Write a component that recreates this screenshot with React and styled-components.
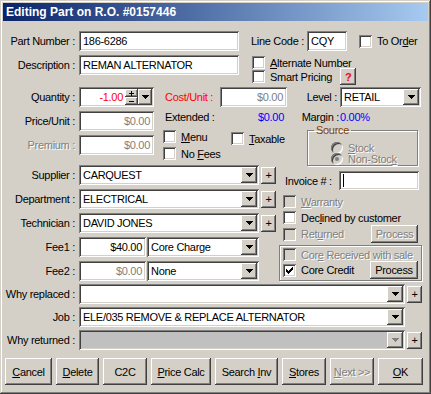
import React from 'react';
import styled, { createGlobalStyle, css } from 'styled-components';

const FACE = '#d4d0c8';

const sunken = css`
  box-shadow: inset 1px 1px #808080, inset -1px -1px #ffffff, inset 2px 2px #404040, inset -2px -2px ${FACE};
`;

const raised = css`
  box-shadow: inset -1px -1px #404040, inset 1px 1px #ffffff, inset -2px -2px #808080;
`;

const GlobalStyle = createGlobalStyle`
  html, body {
    margin: 0;
    padding: 0;
    background: ${FACE};
  }
  body {
    font-family: "Liberation Sans", Arial, sans-serif;
    font-size: 11px;
    letter-spacing: -0.3px;
    color: #000;
  }
  * { box-sizing: border-box; }
`;

const Window = styled.div`
  width: 431px;
  height: 394px;
  padding: 3px;
  background: ${FACE};
  box-shadow: inset -1px -1px #404040, inset 1px 1px ${FACE}, inset -2px -2px #808080, inset 2px 2px #ffffff;
  display: flex;
  flex-direction: column;
`;

const TitleBar = styled.div`
  height: 18px;
  padding-left: 3px;
  display: flex;
  align-items: center;
  background: linear-gradient(to right, #0a246a, #a6caf0);
  color: #fff;
  font-weight: bold;
  font-size: 12px;
  letter-spacing: 0;
`;

const Body = styled.div`
  flex: 1;
  padding: 10px 0 0 2px;
  display: flex;
  flex-direction: column;
`;

const Section = styled.div`
  display: flex;
  align-items: flex-start;
  height: ${(p) => (p.$h ? `${p.$h}px` : 'auto')};
  margin-top: ${(p) => p.$mt || 0}px;
`;

const Col = styled.div`
  display: flex;
  flex-direction: column;
  width: ${(p) => (p.$w ? `${p.$w}px` : 'auto')};
  margin-left: ${(p) => p.$ml || 0}px;
`;

const Row = styled.div`
  display: flex;
  align-items: center;
  height: ${(p) => p.$h || 20}px;
  margin-top: ${(p) => p.$mt || 0}px;
  margin-left: ${(p) => p.$ml || 0}px;
`;

const Label = styled.span`
  flex-shrink: 0;
  width: ${(p) => p.$w || 74}px;
  padding-right: ${(p) => (p.$left ? 0 : p.$pr ?? 4)}px;
  margin-left: ${(p) => p.$ml || 0}px;
  text-align: ${(p) => (p.$left ? 'left' : 'right')};
  white-space: nowrap;
  color: ${(p) => p.$color || '#000'};
  ${(p) => p.$up && css`
    align-self: flex-start;
    line-height: 13px;
  `}
  ${(p) => p.$dim && css`
    color: #808080;
    text-shadow: 1px 1px #fff;
  `}
`;

const Value = styled.span`
  align-self: flex-start;
  line-height: 13px;
  width: ${(p) => (p.$w ? `${p.$w}px` : 'auto')};
  padding-right: ${(p) => p.$pr || 0}px;
  text-align: ${(p) => (p.$right ? 'right' : 'left')};
  color: #0000ff;
`;

const Field = styled.div`
  flex-shrink: 0;
  width: ${(p) => p.$w}px;
  height: ${(p) => p.$h || 20}px;
  padding: 0 4px;
  display: flex;
  align-items: center;
  justify-content: ${(p) => (p.$right ? 'flex-end' : 'flex-start')};
  background: #fff;
  color: ${(p) => p.$color || '#000'};
  white-space: nowrap;
  overflow: hidden;
  ${sunken}
`;

const Caret = styled.span`
  width: 1px;
  height: 13px;
  background: #000;
`;

const SelectBox = styled.div`
  flex-shrink: 0;
  width: ${(p) => p.$w}px;
  height: 20px;
  margin-left: ${(p) => p.$ml || 0}px;
  padding: 2px;
  display: flex;
  align-items: center;
  background: ${(p) => (p.$disabled ? '#c0c0c0' : '#fff')};
  ${sunken}
`;

const SelectText = styled.span`
  flex: 1;
  padding-left: 2px;
  white-space: nowrap;
  overflow: hidden;
`;

const DropBtn = styled.span`
  flex-shrink: 0;
  width: ${(p) => p.$w || 16}px;
  height: 16px;
  display: flex;
  align-items: center;
  justify-content: center;
  background: ${FACE};
  ${raised}
  svg { fill: ${(p) => (p.$disabled ? '#808080' : '#000')}; }
`;

const Arrow = () => (
  <svg width="7" height="4" viewBox="0 0 7 4">
    <path d="M0 0h7v1H0zM1 1h5v1H1zM2 2h3v1H2zM3 3h1v1H3z" />
  </svg>
);

const Select = ({ w, ml, value, disabled }) => (
  <SelectBox $w={w} $ml={ml} $disabled={disabled}>
    <SelectText>{value}</SelectText>
    <DropBtn $disabled={disabled}><Arrow /></DropBtn>
  </SelectBox>
);

const PlusBtn = styled.span`
  flex-shrink: 0;
  width: 15px;
  height: 17px;
  margin-left: 2px;
  display: flex;
  align-items: center;
  justify-content: center;
  background: ${FACE};
  ${raised}
`;

const QtyBox = styled.div`
  flex-shrink: 0;
  width: 75px;
  height: 20px;
  padding: 2px;
  display: flex;
  background: #fff;
  ${sunken}
`;

const QtyText = styled.span`
  flex: 1;
  display: flex;
  align-items: center;
  justify-content: flex-end;
  padding-right: 2px;
  color: #ff0000;
`;

const SpinCol = styled.span`
  width: 13px;
  display: flex;
  flex-direction: column;
`;

const SpinBtn = styled.span`
  flex: 1;
  display: flex;
  align-items: center;
  justify-content: center;
  background: ${FACE};
  ${raised}
`;

const CheckBox = styled.span`
  flex-shrink: 0;
  width: 13px;
  height: 13px;
  display: flex;
  align-items: center;
  justify-content: center;
  background: ${(p) => (p.$disabled ? FACE : '#fff')};
  ${sunken}
`;

const CheckRow = styled.label`
  display: flex;
  align-items: center;
  gap: 5px;
  height: ${(p) => p.$h || 13}px;
  margin-top: ${(p) => p.$mt || 0}px;
  margin-left: ${(p) => p.$ml || 0}px;
  white-space: nowrap;
`;

const Dim = styled.span`
  color: #808080;
  text-shadow: 1px 1px #fff;
`;

const Check = ({ checked, disabled }) => (
  <CheckBox $disabled={disabled}>
    {checked && (
      <svg width="7" height="7" viewBox="0 0 7 7">
        <path d="M6 0h1v1H6zM5 1h2v1H5zM0 2h1v1H0zM4 2h3v1H4zM0 3h2v1H0zM3 3h3v1H3zM0 4h5v1H0zM1 5h3v1H1zM2 6h1v1H2z" fill="#000" />
      </svg>
    )}
  </CheckBox>
);

const RadioDot = styled.span`
  flex-shrink: 0;
  width: 12px;
  height: 12px;
  border-radius: 50%;
  display: flex;
  align-items: center;
  justify-content: center;
  background: ${FACE};
  box-shadow: inset 1px 1px #808080, inset -1px -1px #fff, inset 2px 2px #404040;
  &::after {
    content: '';
    width: 4px;
    height: 4px;
    border-radius: 50%;
    background: ${(p) => (p.$on ? '#808080' : 'transparent')};
  }
`;

const HelpBtn = styled.span`
  width: 16px;
  height: 17px;
  margin-left: 3px;
  display: flex;
  align-items: center;
  justify-content: center;
  background: ${FACE};
  color: #e0102a;
  font-weight: bold;
  text-shadow: 0 0 2px #f7a0b0;
  ${raised}
`;

const ChecksGrid = styled.div`
  display: grid;
  grid-template-columns: 68px auto;
  row-gap: 2px;
  margin: 6px 0 0 9px;
`;

const SourceBox = styled.fieldset`
  margin: 0 0 0 28px;
  min-width: 0;
  width: 111px;
  height: 42px;
  padding: 6px 0 1px 0;
  border: 1px solid #808080;
  box-shadow: inset 1px 1px #fff, 1px 1px #fff;
  legend {
    padding: 0 2px;
    margin-left: 6px;
    line-height: 12px;
    color: #804000;
  }
`;

const RadioRow = styled.div`
  display: flex;
  align-items: center;
  gap: 5px;
  height: 11px;
  margin-left: 23px;
`;

const CoreBox = styled.div`
  width: 143px;
  height: 36px;
  margin-top: 2px;
  padding: 2px 3px 0 3px;
  border: 1px solid #808080;
  box-shadow: inset 1px 1px #fff, 1px 1px #fff;
`;

const Btn = styled.button`
  flex-shrink: 0;
  width: ${(p) => p.$w}px;
  height: ${(p) => p.$h || 27}px;
  margin-left: ${(p) => (p.$push ? 'auto' : '0')};
  margin-right: ${(p) => p.$mr || 0}px;
  padding: 0;
  border: none;
  background: ${FACE};
  font: inherit;
  letter-spacing: inherit;
  color: ${(p) => (p.$disabled ? '#808080' : '#000')};
  text-shadow: ${(p) => (p.$disabled ? '1px 1px #fff' : 'none')};
  ${raised}
`;

const ButtonBar = styled.div`
  display: flex;
  gap: 4px;
  margin-top: 8px;
`;

const Plus = () => (
  <svg width="5" height="5" viewBox="0 0 5 5"><path d="M2 0h1v5H2zM0 2h5v1H0z" fill="#000" /></svg>
);

const Minus = () => (
  <svg width="5" height="1" viewBox="0 0 5 1"><path d="M0 0h5v1H0z" fill="#000" /></svg>
);

export default function App() {
  return (
    <>
      <GlobalStyle />
      <Window>
        <TitleBar>Editing Part on R.O. #0157446</TitleBar>
        <Body>
          <Section $h={56}>
            <Col>
              <Row>
                <Label>Part Number :</Label>
                <Field $w={160}>186-6286</Field>
              </Row>
              <Row $mt={4}>
                <Label>Description :</Label>
                <Field $w={160}>REMAN ALTERNATOR</Field>
              </Row>
            </Col>
            <Col $ml={12}>
              <Row>
                <Label $w={56} $left>Line Code :</Label>
                <Field $w={40}>CQY</Field>
                <CheckRow $ml={12}>
                  <Check />
                  <span>To Or<u>d</u>er</span>
                </CheckRow>
              </Row>
              <CheckRow $mt={5} $ml={1}>
                <Check />
                <span><u>A</u>lternate Number</span>
              </CheckRow>
              <CheckRow $mt={1} $ml={1}>
                <Check />
                <span>Smart Pricing</span>
                <HelpBtn>?</HelpBtn>
              </CheckRow>
            </Col>
          </Section>

          <Row>
            <Label>Quantity :</Label>
            <QtyBox>
              <QtyText>-1.00</QtyText>
              <SpinCol>
                <SpinBtn><Plus /></SpinBtn>
                <SpinBtn><Minus /></SpinBtn>
              </SpinCol>
              <DropBtn $w={14}><Arrow /></DropBtn>
            </QtyBox>
            <Label $w={55} $ml={11} $left $color="#ff0000">Cost/Unit :</Label>
            <Field $w={67} $right $color="#808080">$0.00</Field>
            <Label $w={53} $pr={3}>Level :</Label>
            <Select w={81} value="RETAIL" />
          </Row>
          <Row $mt={4}>
            <Label>Price/Unit :</Label>
            <Field $w={75} $right $color="#808080">$0.00</Field>
            <Label $w={55} $ml={11} $left $up>Extended :</Label>
            <Value $w={67} $pr={3} $right>$0.00</Value>
            <Label $w={53} $pr={1} $up>Margin :</Label>
            <Value>0.00%</Value>
          </Row>

          <Section $mt={-7}>
            <Col $w={274}>
              <Section $h={36}>
                <Row $mt={11}>
                  <Label $dim>Premium :</Label>
                  <Field $w={75} $right $color="#808080">$0.00</Field>
                </Row>
                <ChecksGrid>
                  <CheckRow>
                    <Check />
                    <span><u>M</u>enu</span>
                  </CheckRow>
                  <CheckRow $mt={2}>
                    <Check />
                    <span><u>T</u>axable</span>
                  </CheckRow>
                  <CheckRow>
                    <Check />
                    <span>No <u>F</u>ees</span>
                  </CheckRow>
                </ChecksGrid>
              </Section>
              <Row $mt={5}>
                <Label>Supplier :</Label>
                <Select w={180} value="CARQUEST" />
                <PlusBtn>+</PlusBtn>
              </Row>
              <Row $mt={4}>
                <Label>Department :</Label>
                <Select w={180} value="ELECTRICAL" />
                <PlusBtn>+</PlusBtn>
              </Row>
              <Row $mt={4}>
                <Label>Technician :</Label>
                <Select w={180} value="DAVID JONES" />
                <PlusBtn>+</PlusBtn>
              </Row>
              <Row $mt={4}>
                <Label>Fee1 :</Label>
                <Field $w={67} $right>$40.00</Field>
                <Select w={112} ml={1} value="Core Charge" />
              </Row>
              <Row $mt={4}>
                <Label>Fee2 :</Label>
                <Field $w={67} $right $color="#808080">$0.00</Field>
                <Select w={112} ml={1} value="None" />
              </Row>
            </Col>
            <Col>
              <SourceBox>
                <legend>Source</legend>
                <RadioRow>
                  <RadioDot />
                  <Dim><u>S</u>tock</Dim>
                </RadioRow>
                <RadioRow>
                  <RadioDot $on />
                  <Dim>Non-Stoc<u>k</u></Dim>
                </RadioRow>
              </SourceBox>
              <Row $h={19} $mt={5} $ml={6}>
                <Label $w={54} $left>Invoice # :</Label>
                <Field $w={80} $h={19}><Caret /></Field>
              </Row>
              <CheckRow $mt={5} $ml={4}>
                <Check disabled />
                <Dim><u>W</u>arranty</Dim>
              </CheckRow>
              <CheckRow $mt={3} $ml={4}>
                <Check />
                <span>Dec<u>l</u>ined by customer</span>
              </CheckRow>
              <Row $h={18} $mt={1} $ml={4}>
                <CheckRow>
                  <Check disabled />
                  <Dim>Ret<u>u</u>rned</Dim>
                </CheckRow>
                <Btn $w={47} $h={18} $push $mr={4} $disabled>Process</Btn>
              </Row>
              <CoreBox>
                <CheckRow>
                  <Check disabled />
                  <Dim>Cor<u>e</u> Received with sale</Dim>
                </CheckRow>
                <Row $h={18}>
                  <CheckRow>
                    <Check checked />
                    <span>Core Credit</span>
                  </CheckRow>
                  <Btn $w={48} $h={18} $push>Process</Btn>
                </Row>
              </CoreBox>
            </Col>
          </Section>

          <Row $mt={3}>
            <Label>Why replaced :</Label>
            <Select w={326} />
            <PlusBtn>+</PlusBtn>
          </Row>
          <Row $mt={3}>
            <Label>Job :</Label>
            <Select w={326} value="ELE/035 REMOVE & REPLACE ALTERNATOR" />
          </Row>
          <Row $mt={3}>
            <Label>Why returned :</Label>
            <Select w={326} disabled />
            <PlusBtn>+</PlusBtn>
          </Row>

          <ButtonBar>
            <Btn $w={47}><u>C</u>ancel</Btn>
            <Btn $w={43}><u>D</u>elete</Btn>
            <Btn $w={44}>C2C</Btn>
            <Btn $w={60}><u>P</u>rice Calc</Btn>
            <Btn $w={63}>Search <u>I</u>nv</Btn>
            <Btn $w={44}><u>S</u>tores</Btn>
            <Btn $w={44} $disabled><u>N</u>ext &gt;&gt;</Btn>
            <Btn $w={45}><u>O</u>K</Btn>
          </ButtonBar>
        </Body>
      </Window>
    </>
  );
}
